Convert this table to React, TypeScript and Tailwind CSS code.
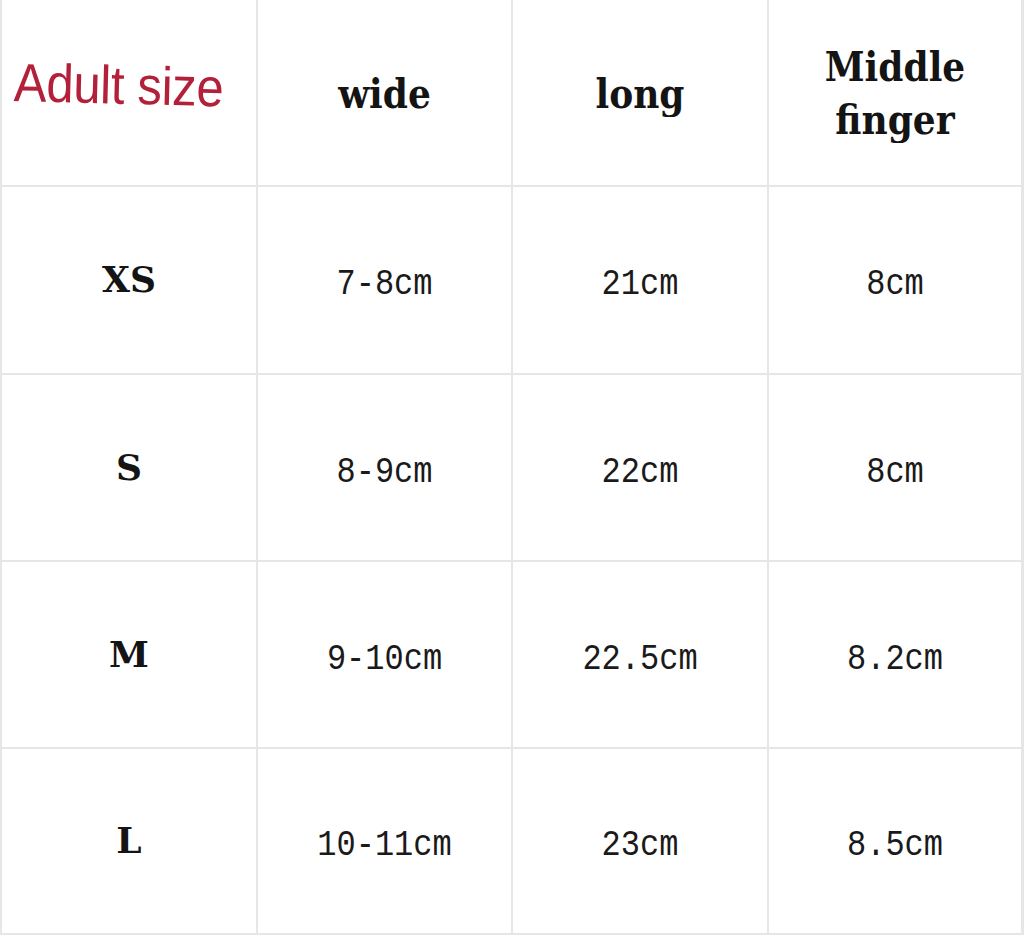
import React from "react";

const rows = [
  ["XS", "7-8cm", "21cm", "8cm"],
  ["S", "8-9cm", "22cm", "8cm"],
  ["M", "9-10cm", "22.5cm", "8.2cm"],
  ["L", "10-11cm", "23cm", "8.5cm"],
];

const bold = "font-['DejaVu_Serif',serif] font-bold text-[36px] text-[#141414]";
const mono = "font-['Liberation_Mono',monospace] text-[32px] text-[#1a1a1a] inline-block scale-y-[1.18]";

export default function App() {
  return (
    <div className="w-[1024px] h-[937px] bg-white">
      <div className="grid grid-cols-[254px_253px_254px_252px] grid-rows-[185px_186px_185px_185px_184px] gap-[2px] bg-[#e6e6e6] pl-[2px] pr-[3px] pb-[2px]">
        <div className="bg-white flex items-center pl-[12px] pb-[14px]">
          <span className="font-['Liberation_Sans',sans-serif] text-[49px] text-[#b3203a] inline-block scale-y-[1.1] rotate-[1.5deg] tracking-[-0.3px]">
            Adult size
          </span>
        </div>
        <div className={`bg-white flex items-center justify-center ${bold}`}>
          <span className="inline-block scale-y-[1.12]">wide</span>
        </div>
        <div className={`bg-white flex items-center justify-center ${bold}`}>
          <span className="inline-block scale-y-[1.12]">long</span>
        </div>
        <div className={`bg-white flex flex-col items-center justify-center leading-[53px] pb-[0px] ${bold}`}>
          <span className="inline-block scale-y-[1.12]">Middle</span>
          <span className="inline-block scale-y-[1.12]">finger</span>
        </div>
        {rows.map((r) => (
          <React.Fragment key={r[0]}>
            <div className={`bg-white flex items-center justify-center pb-[2px] ${bold}`}>
              <span className="inline-block">{r[0]}</span>
            </div>
            {r.slice(1).map((v, i) => (
              <div key={i} className="bg-white flex items-center justify-center pt-[10px]">
                <span className={mono}>{v}</span>
              </div>
            ))}
          </React.Fragment>
        ))}
      </div>
    </div>
  );
}
